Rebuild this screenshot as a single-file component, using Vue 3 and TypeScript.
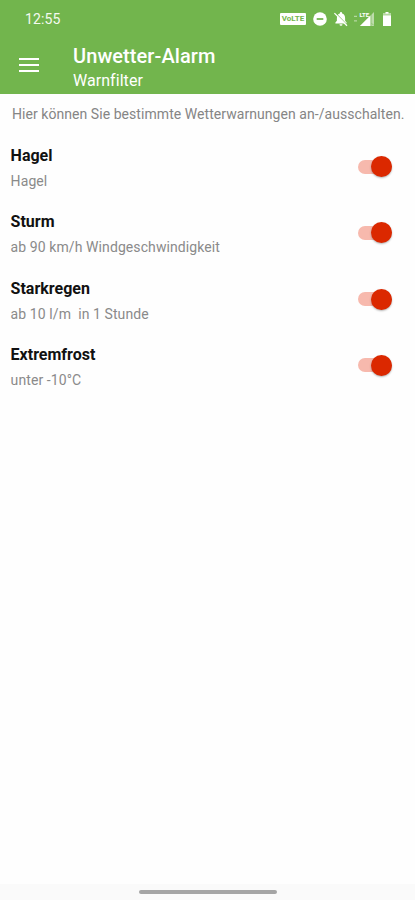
<script setup lang="ts">
import { ref } from 'vue'

interface WarningFilter {
  id: string
  title: string
  detail: string
  enabled: boolean
}

const filters = ref<WarningFilter[]>([
  { id: 'hail', title: 'Hagel', detail: 'Hagel', enabled: true },
  { id: 'storm', title: 'Sturm', detail: 'ab 90 km/h Windgeschwindigkeit', enabled: true },
  { id: 'rain', title: 'Starkregen', detail: 'ab 10 l/m  in 1 Stunde', enabled: true },
  { id: 'frost', title: 'Extremfrost', detail: 'unter -10°C', enabled: true },
])
</script>

<template>
  <div class="screen">
    <header class="header">
      <div class="status">
        <span class="clock">12:55</span>
        <div class="status-icons">
          <span class="volte">VoLTE</span>
          <svg class="dnd" width="14" height="14" viewBox="0 0 14 14">
            <circle cx="7" cy="7" r="6.8" fill="#fff" />
            <path d="M3.7 7h6.6" stroke="#72b54d" stroke-width="1.8" />
          </svg>
          <svg class="bell" width="16" height="16" viewBox="0 0 16 16">
            <path d="M2.4 12.6v-1.2l1.5-1.6V7c0-2.3 1.2-3.9 3-4.4V2a1.1 1.1 0 0 1 2.2 0v.6c1.8.5 3 2.1 3 4.4v2.8l1.5 1.6v1.2zM6.5 13.3h3a1.5 1.5 0 0 1-3 0z" fill="#fff" />
            <path d="M2.3 1.7l12 12.3" stroke="#72b54d" stroke-width="1" />
            <path d="M1.4 2.1l12.6 12.7" stroke="#fff" stroke-width="1.3" />
          </svg>
          <svg class="signal" width="21" height="16" viewBox="0 0 21 16">
            <path d="M0 5.3h3M0 9.8h3" stroke="#b5d8a0" stroke-width="1.2" />
            <path d="M20 1v14H6z" fill="#bddcaa" />
            <path d="M16.5 4.5V15H6z" fill="#fff" />
            <path d="M17 3v12M17.7 12.3l2 2" stroke="#72b54d" stroke-width=".6" />
            <text x="5.5" y="6.3" class="network">LTE</text>
          </svg>
          <svg class="battery" width="8" height="14" viewBox="0 0 8 14">
            <path d="M2.5 0h3v1.6H8V14H0V1.6h2.5z" fill="#fff" />
            <path d="M0 2.6h8" stroke="#b5d8a0" stroke-width="1.8" />
          </svg>
        </div>
      </div>
      <div class="toolbar">
        <button class="menu" type="button" aria-label="Menü">
          <span></span><span></span><span></span>
        </button>
        <div class="titles">
          <h1>Unwetter-Alarm</h1>
          <p>Warnfilter</p>
        </div>
      </div>
    </header>

    <main class="content">
      <p class="intro">Hier können Sie bestimmte Wetterwarnungen an-/ausschalten.</p>
      <label v-for="filter in filters" :key="filter.id" class="row">
        <span class="labels">
          <span class="name">{{ filter.title }}</span>
          <span class="detail">{{ filter.detail }}</span>
        </span>
        <span class="toggle" :class="{ on: filter.enabled }">
          <input v-model="filter.enabled" type="checkbox" />
          <span class="knob"></span>
        </span>
      </label>
    </main>

    <footer class="navigation"><span class="handle"></span></footer>
  </div>
</template>

<style>
body {
  margin: 0;
  background: #fefefe;
}
</style>

<style scoped>
.screen {
  width: 415px;
  height: 900px;
  display: flex;
  flex-direction: column;
  overflow: hidden;
  background: #fefefe;
  font-family: Roboto, sans-serif;
}
.header {
  height: 94px;
  flex: none;
  box-sizing: border-box;
  background: #72b54d;
  color: #fff;
}
.status {
  height: 38px;
  display: flex;
  align-items: center;
  justify-content: space-between;
  padding: 0 24px 0 25px;
}
.clock {
  font-size: 14px;
  line-height: 20px;
  letter-spacing: 0.15px;
  color: #f4faef;
}
.status-icons {
  display: flex;
  align-items: center;
}
.volte {
  width: 26px;
  height: 12px;
  border-radius: 1px;
  background: #fff;
  color: #72b54d;
  font-size: 8px;
  font-weight: 700;
  line-height: 12.5px;
  text-align: center;
}
.dnd { margin-left: 7px; }
.bell { margin-left: 6px; }
.signal { margin-left: 5px; }
.battery { margin-left: 8px; }
.network {
  font: 700 6px Roboto, sans-serif;
  fill: #fff;
}
.toolbar {
  display: flex;
  align-items: flex-start;
  padding-left: 19px;
}
.menu {
  width: 20px;
  margin: 20px 0 0;
  padding: 0;
  border: 0;
  background: none;
  display: flex;
  flex-direction: column;
  gap: 4px;
}
.menu span {
  height: 2px;
  background: #fff;
}
.titles { margin: 5px 0 0 34px; }
h1, p { margin: 0; }
h1 {
  font-size: 20px;
  font-weight: 500;
  line-height: 26px;
  letter-spacing: 0.08px;
}
.titles p {
  font-size: 16px;
  line-height: 24px;
  letter-spacing: 0.05px;
}
.content {
  flex: 1;
  padding-top: 10px;
}
.intro {
  padding-left: 12px;
  margin-bottom: 7px;
  font-size: 14px;
  line-height: 21px;
  letter-spacing: 0.055px;
  color: #858585;
  white-space: nowrap;
}
.row {
  height: 66.3px;
  box-sizing: border-box;
  display: flex;
  align-items: flex-start;
  justify-content: space-between;
  padding: 11px 23px 0 10.6px;
}
.labels {
  display: flex;
  flex-direction: column;
}
.name {
  font-size: 16px;
  font-weight: 700;
  line-height: 26px;
  color: #111;
}
.detail {
  font-size: 14px;
  line-height: 24px;
  letter-spacing: 0.09px;
  color: #8a8a8a;
  white-space: pre;
}
.toggle {
  width: 34px;
  height: 14px;
  margin-top: 16.5px;
  display: flex;
  align-items: center;
  border-radius: 7px;
  background: #d5d5d5;
}
.toggle input {
  appearance: none;
  width: 0;
  height: 0;
  margin: 0;
}
.knob {
  width: 21px;
  height: 21px;
  flex: none;
  border-radius: 50%;
  background: #f5f5f5;
  box-shadow: 0 1px 2px rgb(0 0 0 / 30%);
}
.toggle.on { background: #f7b9ad; }
.toggle.on .knob {
  margin-left: 13px;
  background: #db2800;
}
.navigation {
  height: 16px;
  flex: none;
  display: flex;
  align-items: center;
  justify-content: center;
  background: #fafafa;
}
.handle {
  width: 138px;
  height: 4px;
  border-radius: 2px;
  background: #a5a5a5;
}
</style>
